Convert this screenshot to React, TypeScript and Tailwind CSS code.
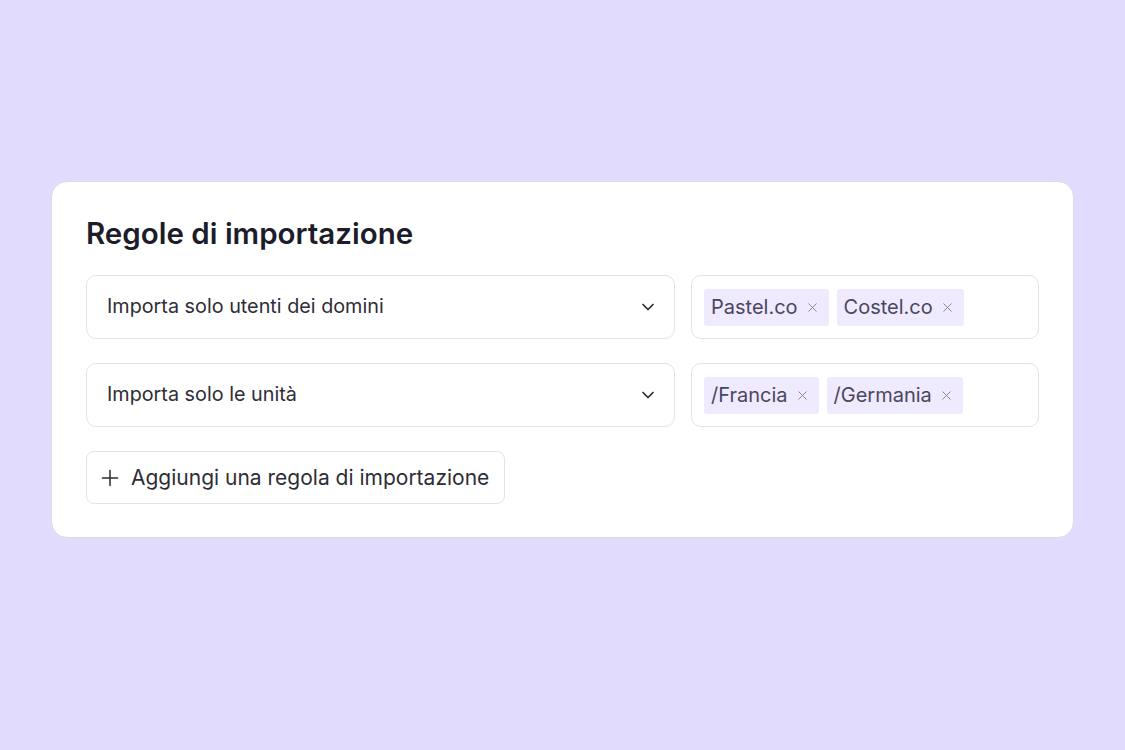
import React from 'react';
import { ChevronDown, Plus, X } from 'lucide-react';

type Rule = {
  label: string;
  values: string[];
};

const rules: Rule[] = [
  { label: 'Importa solo utenti dei domini', values: ['Pastel.co', 'Costel.co'] },
  { label: 'Importa solo le unità', values: ['/Francia', '/Germania'] },
];

const Tag: React.FC<{ value: string }> = ({ value }) => (
  <span className="flex items-center gap-[7px] h-[37px] pl-[7px] pr-[9px] rounded-[3px] bg-[#efeafe] text-[20px] text-[#4a4660]">
    {value}
    <X size={15} strokeWidth={1.6} className="text-[#8a8699]" />
  </span>
);

const RuleRow: React.FC<{ rule: Rule }> = ({ rule }) => (
  <div className="flex gap-4">
    <button className="flex flex-1 items-center justify-between h-16 pl-5 pr-4 rounded-[10px] border border-[#e3e2ea] bg-white text-left">
      <span className="text-[19.8px] text-[#2e2d36]">{rule.label}</span>
      <ChevronDown size={20} strokeWidth={2} className="text-[#2a2933]" />
    </button>
    <div className="flex w-[348px] items-center gap-2 h-16 px-[12px] rounded-[10px] border border-[#e3e2ea] bg-white">
      {rule.values.map((v) => (
        <Tag key={v} value={v} />
      ))}
    </div>
  </div>
);

export default function App() {
  return (
    <div className="min-h-[750px] w-full bg-[#e1dcfe] pt-[181px] px-[51px] font-['Inter',sans-serif]">
      <div className="w-[1023px] rounded-[16px] border border-[#dcdae6] bg-white px-[34px] pt-[31px] pb-[33px]">
        <h2 className="text-[29.5px] leading-[40px] font-semibold text-[#1d1c2b] mb-[22px]">
          Regole di importazione
        </h2>
        <div className="flex flex-col gap-6">
          {rules.map((r) => (
            <RuleRow key={r.label} rule={r} />
          ))}
          <div>
            <button className="flex items-center gap-[8px] h-[53px] pl-[10px] pr-[15px] rounded-[8px] border border-[#e3e2ea] bg-white text-[21px] text-[#2e2d36]">
              <Plus size={26} strokeWidth={1.4} className="text-[#2e2d36]" />
              Aggiungi una regola di importazione
            </button>
          </div>
        </div>
      </div>
    </div>
  );
}
